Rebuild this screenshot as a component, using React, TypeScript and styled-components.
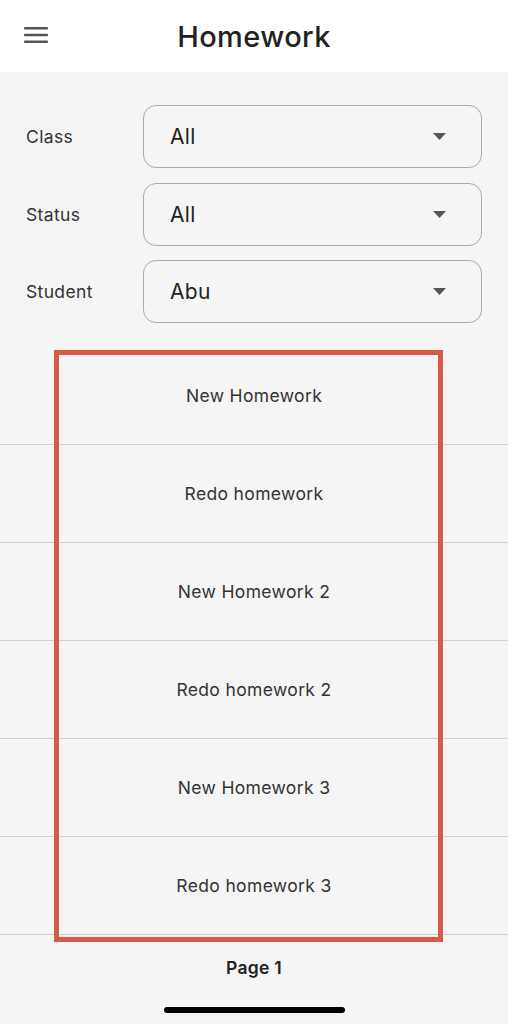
import React from "react";
import styled, { createGlobalStyle } from "styled-components";

const Global = createGlobalStyle`
  html, body { margin: 0; padding: 0; background: #f5f5f5; }
  body { font-family: Inter, "Noto Sans", Roboto, sans-serif; color: #2b2b2b; }
  * { box-sizing: border-box; }
`;

const Page = styled.div`
  position: relative;
  width: 508px;
  height: 1024px;
  background: #f5f5f5;
  display: flex;
  flex-direction: column;
  overflow: hidden;
`;

const AppBar = styled.header`
  height: 72px;
  background: #ffffff;
  display: grid;
  grid-template-columns: 72px 1fr 72px;
  align-items: center;
  flex-shrink: 0;
`;

const MenuButton = styled.div`
  display: flex;
  align-items: center;
  padding-left: 24px;
  padding-bottom: 2px;
`;

const Title = styled.h1`
  margin: 0;
  text-align: center;
  font-size: 29px;
  font-weight: 500;
  color: #222;
  padding-top: 1px;
  letter-spacing: 0.4px;
`;

const Filters = styled.div`
  display: flex;
  flex-direction: column;
  gap: 14.5px;
  padding: 33px 26px 0 26px;
`;

const FilterRow = styled.div`
  display: grid;
  grid-template-columns: 117px 1fr;
  align-items: center;
`;

const Label = styled.span`
  font-size: 17.5px;
  color: #333;
  letter-spacing: 0.35px;
`;

const SelectBox = styled.div`
  height: 63px;
  border: 1.5px solid #a9a9a9;
  border-radius: 13px;
  display: flex;
  align-items: center;
  justify-content: space-between;
  padding: 0 35px 0 26px;
  background: #f5f5f5;
`;

const SelectValue = styled.span`
  font-size: 21px;
  color: #222;
  letter-spacing: 0.3px;
`;

const List = styled.div`
  margin-top: 24px;
  display: flex;
  flex-direction: column;
`;

const Row = styled.div`
  height: 98px;
  display: flex;
  align-items: center;
  justify-content: center;
  border-bottom: 1px solid #cfcfcf;
  font-size: 17.5px;
  color: #333;
  letter-spacing: 0.35px;
`;

const Pager = styled.div`
  height: 65px;
  display: flex;
  align-items: center;
  justify-content: center;
  font-size: 17.5px;
  font-weight: 600;
  color: #222;
  letter-spacing: 0.3px;
`;

const HomeIndicator = styled.div`
  width: 181px;
  height: 6px;
  border-radius: 3px;
  background: #000;
  margin: 7px auto 0;
`;

const Highlight = styled.div`
  position: absolute;
  left: 54px;
  top: 350px;
  width: 389px;
  height: 592px;
  border: 5px solid #d65b4b;
  pointer-events: none;
`;

const Hamburger = () => (
  <svg width="24" height="18" viewBox="0 0 24 18">
    <rect x="0" y="1" width="24" height="2.4" rx="1" fill="#555" />
    <rect x="0" y="7.8" width="24" height="2.4" rx="1" fill="#555" />
    <rect x="0" y="14.6" width="24" height="2.4" rx="1" fill="#555" />
  </svg>
);

const Caret = () => (
  <svg width="13" height="7" viewBox="0 0 13 7">
    <path d="M0 0 L13 0 L6.5 7 Z" fill="#555" />
  </svg>
);

const filters = [
  { label: "Class", value: "All" },
  { label: "Status", value: "All" },
  { label: "Student", value: "Abu" },
];

const items = [
  "New Homework",
  "Redo homework",
  "New Homework 2",
  "Redo homework 2",
  "New Homework 3",
  "Redo homework 3",
];

export default function App() {
  return (
    <Page>
      <Global />
      <AppBar>
        <MenuButton>
          <Hamburger />
        </MenuButton>
        <Title>Homework</Title>
        <div />
      </AppBar>
      <Filters>
        {filters.map((f) => (
          <FilterRow key={f.label}>
            <Label>{f.label}</Label>
            <SelectBox>
              <SelectValue>{f.value}</SelectValue>
              <Caret />
            </SelectBox>
          </FilterRow>
        ))}
      </Filters>
      <List>
        {items.map((t) => (
          <Row key={t}>{t}</Row>
        ))}
      </List>
      <Pager>Page 1</Pager>
      <HomeIndicator />
      <Highlight />
    </Page>
  );
}
